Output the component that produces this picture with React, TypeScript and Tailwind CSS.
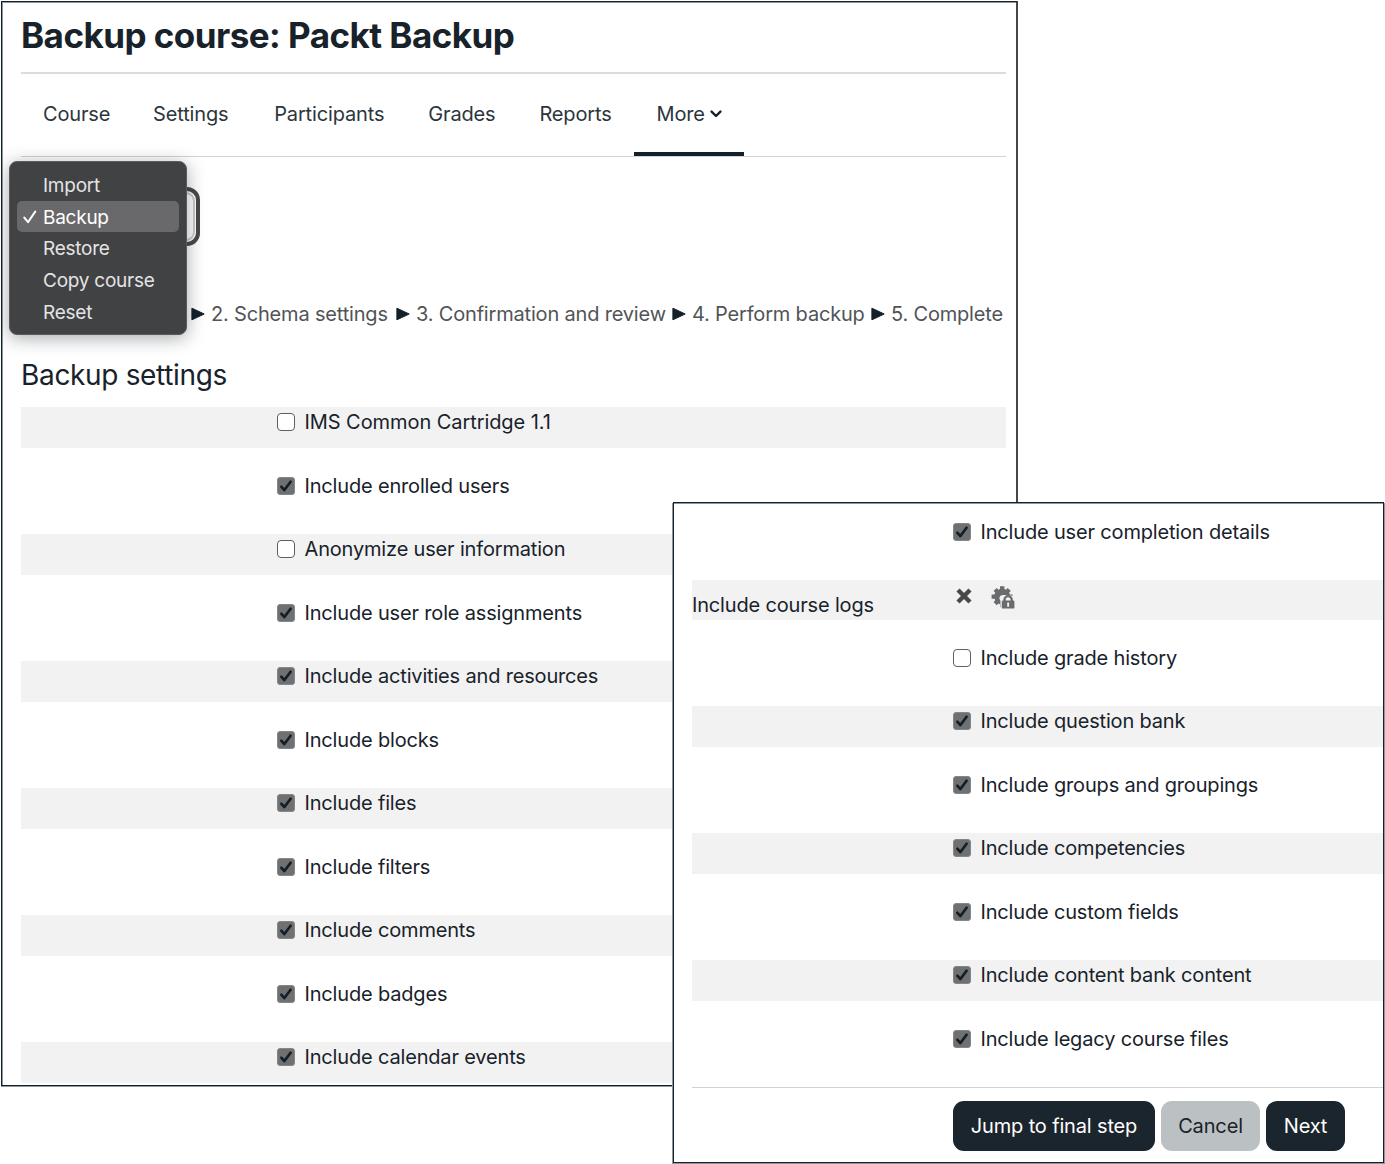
import React from "react";

const tabs = [
  { label: "Course", width: "w-[66px]" },
  { label: "Settings", width: "w-[77px]" },
  { label: "Participants", width: "w-[110px]" },
  { label: "Grades", width: "w-[67px]" },
  { label: "Reports", width: "w-[73px]" },
];

const menuItems = ["Import", "Backup", "Restore", "Copy course", "Reset"];

const steps = [
  { label: "2. Schema settings", width: "w-[178px]" },
  { label: "3. Confirmation and review", width: "w-[249px]" },
  { label: "4. Perform backup", width: "w-[172px]" },
  { label: "5. Complete", width: "w-[112px]" },
];

const leftRows = [
  { label: "IMS Common Cartridge 1.1", checked: false, tracking: "tracking-[-0.07px]" },
  { label: "Include enrolled users", checked: true },
  { label: "Anonymize user information", checked: false },
  { label: "Include user role assignments", checked: true },
  { label: "Include activities and resources", checked: true },
  { label: "Include blocks", checked: true },
  { label: "Include files", checked: true },
  { label: "Include filters", checked: true },
  { label: "Include comments", checked: true },
  { label: "Include badges", checked: true },
  { label: "Include calendar events", checked: true },
];

const rightRows = [
  { label: "Include grade history", checked: false },
  { label: "Include question bank", checked: true },
  { label: "Include groups and groupings", checked: true },
  { label: "Include competencies", checked: true },
  { label: "Include custom fields", checked: true },
  { label: "Include content bank content", checked: true },
  { label: "Include legacy course files", checked: true },
];

function Box({ checked }: { checked: boolean }) {
  return (
    <span
      className={
        checked
          ? "flex size-[18px] shrink-0 items-center justify-center rounded-[3px] border border-[#858688] bg-[#6f7072]"
          : "block size-[18px] shrink-0 rounded-[4px] border-[1.5px] border-[#5c5e60] bg-white"
      }
    >
      {checked && (
        <svg viewBox="0 0 18 18" className="size-[18px] shrink-0" fill="none" stroke="#141e26" strokeWidth="2.7" strokeLinecap="round" strokeLinejoin="round">
          <path d="M4.4 9.8 7.4 13 13.6 4.8" />
        </svg>
      )}
    </span>
  );
}

type RowProps = { label: string; checked: boolean; striped: boolean; pad: string; tracking?: string };

function Row({ label, checked, striped, pad, tracking = "tracking-[-0.17px]" }: RowProps) {
  return (
    <div className={`mb-[22px] flex h-[41.5px] items-start ${pad} ${striped ? "bg-[#f2f2f2]" : ""}`}>
      <div className="flex h-[31.5px] items-center gap-[9.5px]">
        <Box checked={checked} />
        <span className={`text-[20px] leading-8 whitespace-nowrap ${tracking}`}>{label}</span>
      </div>
    </div>
  );
}

function Arrow() {
  return (
    <svg viewBox="0 0 14 14" className="h-[14px] w-[14px] shrink-0" fill="#14202a" stroke="#14202a" strokeWidth="1" strokeLinejoin="round">
      <path d="M.9 1.2V12.8L13.2 7Z" />
    </svg>
  );
}

function BackupMenu() {
  return (
    <div className="absolute top-[159px] left-[7px] h-[174px] w-[178px] rounded-[8px] border border-[#5b5c5e] bg-[#414244] px-[7px] pt-[7px] text-[#e4e4e5] shadow-[0_3px_18px_rgba(20,30,40,0.38)]">
      {menuItems.map((item) => (
        <div
          key={item}
          className={
            item === "Backup"
              ? "flex h-[31.6px] w-[162px] items-center rounded-[5px] bg-[#69696b] text-white"
              : "flex h-[31.6px] items-center"
          }
        >
          <span className="flex w-[26px] justify-center pt-[2px]">
            {item === "Backup" && (
              <svg viewBox="0 0 14 14" className="size-[14px]" fill="none" stroke="white" strokeWidth="2" strokeLinecap="round" strokeLinejoin="round">
                <path d="M1.3 7.6 5 12.2 12.2 1.6" />
              </svg>
            )}
          </span>
          <span className="pt-[3.5px] text-[19px] tracking-[-0.25px] whitespace-nowrap">{item}</span>
        </div>
      ))}
    </div>
  );
}

function LockedGear() {
  return (
    <svg viewBox="0 0 24 24" className="size-6" fill="#6a6b6d">
      <circle cx="11.2" cy="10.6" r="7.9" />
      <path d="M9 .2h4.4v21H9zM.6 8.4h21v4.4h-21z" />
      <path d="M9 .6h4.4v20H9z" transform="rotate(45 11.2 10.6)" />
      <path d="M9 .6h4.4v20H9z" transform="rotate(-45 11.2 10.6)" />
      <path d="M9.4 24V14.5Q8.2 13.2 8.4 11.6 9 9 11.6 9H15q3 0 5 .6l4 1V24Z" fill="#f2f2f2" />
      <path d="M13.5 15.3V13.8a3.6 3.6 0 0 1 7.2 0v1.5" fill="none" stroke="#6a6b6d" strokeWidth="2.3" />
      <rect x="10.8" y="14.6" width="12.6" height="8" rx="1.2" />
      <path d="M16.2 16.6h1.9v4.1h-1.9z" fill="#f2f2f2" />
    </svg>
  );
}

export default function App() {
  return (
    <main className="relative h-[1164px] w-[1385px] overflow-hidden bg-white font-[Inter,sans-serif] text-[#18222a]">
      <section className="relative mt-px ml-px h-[1085px] w-[1017px] overflow-hidden border border-r-2 border-[#14202a] border-r-[#444648] shadow-[inset_1px_1px_0_#8f979c,0_1px_0_#8f979c]">
        <div className="mr-[10px] ml-[19px]">
          <header className="flex h-[72px] items-start border-b-2 border-[#dcdcdc] pt-[8px]">
            <h1 className="text-[35px] leading-[50px] font-bold tracking-[-0.54px] whitespace-nowrap">Backup course: Packt Backup</h1>
          </header>
          <nav className="flex h-[83px] border-b border-[#d2d2d2] pl-[22px] text-[20px] tracking-[-0.15px] text-[#2c353c]">
            {tabs.map((t) => (
              <span key={t.label} className={`mr-[44.1px] flex h-[79px] shrink-0 items-center whitespace-nowrap ${t.width}`}>
                {t.label}
              </span>
            ))}
            <span className="-ml-[22px] flex h-[82px] w-[110px] items-center border-b-4 border-[#14202a] pt-px pl-[22px] whitespace-nowrap">
              More
              <svg viewBox="0 0 12 8" className="ml-[5px] h-2 w-3" fill="none" stroke="#18222a" strokeWidth="2.4" strokeLinecap="round" strokeLinejoin="round">
                <path d="M1.6 1.6 6 6 10.4 1.6" />
              </svg>
            </span>
          </nav>
          <div className="mt-[30px] h-[59px] w-[179px] rounded-[13px] border-[4px] border-[#48494b] bg-white p-px">
            <div className="h-full rounded-[9px] border-[2px] border-[#c9cbcd]" />
          </div>
          <div className="mt-[52px] flex h-8 items-center pl-[169.5px] text-[20px] tracking-[-0.18px] text-[#505458]">
            {steps.map((s) => (
              <React.Fragment key={s.label}>
                <Arrow />
                <span className={`mx-[6.5px] shrink-0 whitespace-nowrap ${s.width}`}>{s.label}</span>
              </React.Fragment>
            ))}
          </div>
          <h2 className="mt-[25px] h-[51.5px] text-[28px] leading-[40px] tracking-[-0.33px] whitespace-nowrap">Backup settings</h2>
          {leftRows.map((r, i) => (
            <Row key={r.label} {...r} striped={i % 2 === 0} pad="pl-[256px]" />
          ))}
        </div>
        <BackupMenu />
      </section>

      <section className="absolute top-[502px] left-[673px] h-[661px] w-[711px] overflow-hidden border border-[#14202a] bg-white shadow-[inset_0_1px_0_#8f979c,-1px_1px_0_#8f979c,1px_1px_0_#8f979c]">
        <div className="ml-[18px] pt-[13px]">
          <Row label="Include user completion details" checked striped={false} pad="pl-[261px]" />
          <div className="mb-[22px] flex h-[40.5px] bg-[#f2f2f2]">
            <span className="w-[264px] pt-[9px] text-[20px] leading-8 tracking-[-0.17px] whitespace-nowrap">Include course logs</span>
            <svg viewBox="0 0 16 16" className="mt-[8px] size-4" fill="none" stroke="#47494b" strokeWidth="4.4">
              <path d="M2 2 14 14M14 2 2 14" />
            </svg>
            <span className="mt-[6.5px] ml-[19px]">
              <LockedGear />
            </span>
          </div>
          {rightRows.map((r, i) => (
            <Row key={r.label} {...r} striped={i % 2 === 1} pad="pl-[261px]" />
          ))}
          <footer className="flex gap-[6px] border-t-[1.5px] border-[#d2d2d2] pt-[13px] pl-[261px] text-[20px] tracking-[-0.15px]">
            <button className="h-[50px] w-[202px] rounded-[11px] bg-[#1b252d] pt-[1.5px] whitespace-nowrap text-white">Jump to final step</button>
            <button className="h-[50px] w-[99px] rounded-[11px] bg-[#bbc0c3] pt-[1.5px] whitespace-nowrap">Cancel</button>
            <button className="h-[50px] w-[79px] rounded-[11px] bg-[#1b252d] pt-[1.5px] whitespace-nowrap text-white">Next</button>
          </footer>
        </div>
      </section>
    </main>
  );
}
